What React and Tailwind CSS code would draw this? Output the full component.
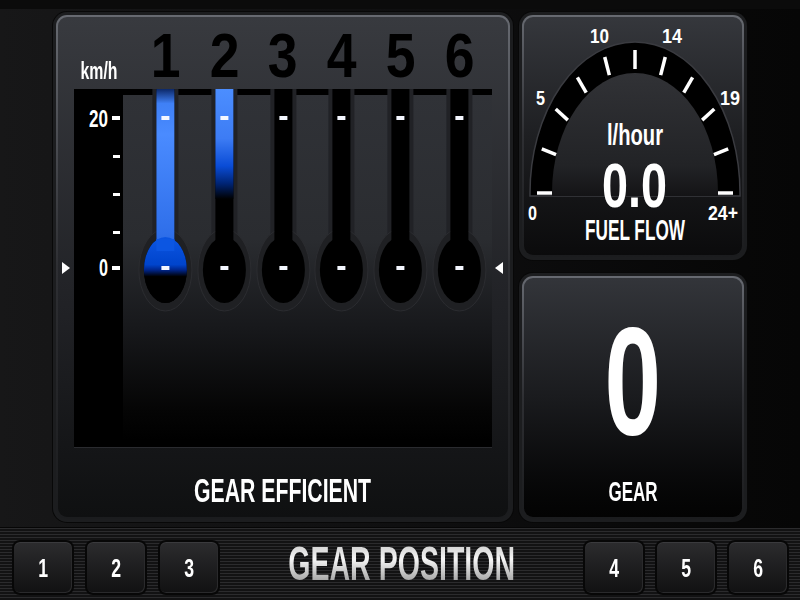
const Frame = ({ className, inner, children }) => (
  <div className={`rounded-[14px] bg-[#1c1d1f] p-[3px] shadow-[0_0_0_1px_#080808] ${className}`}>
    <div className="h-full rounded-[11px] bg-gradient-to-b from-[#676a71] via-[#2e2f33] to-[#1b1c1e] p-[2px]">
      <div className={`h-full rounded-[9px] ${inner}`}>{children}</div>
    </div>
  </div>
);

// one thermometer column of the gear chart
function Tube({ level }) {
  const c = 29.4;
  const id = `t${level}`;
  return (
    <svg width="58.8" height="225" viewBox="0 0 58.8 225" className="block">
      <defs>
        <linearGradient id={`${id}a`} x1="0" y1="0" x2="0" y2="181" gradientUnits="userSpaceOnUse">
          <stop offset="0" stopColor="#0c2868" />
          <stop offset="0.08" stopColor="#3f80f6" />
          <stop offset="0.25" stopColor="#4a8bff" />
          <stop offset="0.8" stopColor="#2f6fea" />
          <stop offset="1" stopColor="#1658dc" />
        </linearGradient>
        <linearGradient id={`${id}b`} x1="0" y1="148" x2="0" y2="214" gradientUnits="userSpaceOnUse">
          <stop offset="0" stopColor="#0c56e2" />
          <stop offset="0.42" stopColor="#0044cc" />
          <stop offset="0.5" stopColor="#00258a" />
          <stop offset="0.6" stopColor="#000" />
        </linearGradient>
        <linearGradient id={`${id}c`} x1="0" y1="0" x2="0" y2="110" gradientUnits="userSpaceOnUse">
          <stop offset="0" stopColor="#4c8eff" />
          <stop offset="0.45" stopColor="#3d7cf4" />
          <stop offset="0.7" stopColor="#0a4cd6" />
          <stop offset="0.86" stopColor="#002474" />
          <stop offset="1" stopColor="#000" />
        </linearGradient>
      </defs>
      <rect x={c - 13} y="0" width="26" height="181" fill="#212226" />
      <ellipse cx={c} cy="181" rx="26.5" ry="41" fill="#1f2023" stroke="#2b2c30" strokeWidth="1" />
      <rect x={c - 9} y="0" width="18" height="181" fill="#000" />
      <ellipse cx={c} cy="181" rx="21.5" ry="33" fill="#000" />
      {level === 1 && (
        <>
          <rect x={c - 9} y="0" width="18" height="160" fill={`url(#${id}a)`} />
          <ellipse cx={c} cy="181" rx="21.5" ry="33" fill={`url(#${id}b)`} />
          <rect x={c - 9} y="150" width="18" height="12" fill="#0c56e2" />
        </>
      )}
      {level === 2 && <rect x={c - 9} y="0" width="18" height="110" fill={`url(#${id}c)`} />}
      <rect x={c - 4} y="27" width="8" height="4" fill="#f4f7ff" />
      <rect x={c - 4} y="177" width="8" height="4" fill="#f4f7ff" />
    </svg>
  );
}

function FuelGauge() {
  const cx = 635;
  const cy = 193;
  const ticks = Array.from({ length: 11 }, (_, i) => {
    const a = Math.PI - (i * Math.PI) / 10;
    return {
      x1: cx + 98 * Math.cos(a),
      y1: cy - 143 * Math.sin(a),
      x2: cx + 83 * Math.cos(a),
      y2: cy - 124 * Math.sin(a),
    };
  });
  const labels = [
    { t: '0', x: 528, y: 220, w: 9 },
    { t: '5', x: 536, y: 105, w: 9 },
    { t: '10', x: 590, y: 43, w: 19 },
    { t: '14', x: 662, y: 43, w: 20 },
    { t: '19', x: 720, y: 105, w: 20 },
    { t: '24+', x: 708, y: 220, w: 30 },
  ];
  return (
    <svg width="218" height="238" viewBox="524 17 218 238" className="block">
      <defs>
        <linearGradient id="dome" x1="0" y1="73" x2="0" y2="196" gradientUnits="userSpaceOnUse">
          <stop offset="0" stopColor="#313236" />
          <stop offset="0.75" stopColor="#222326" />
          <stop offset="1" stopColor="#141416" />
        </linearGradient>
      </defs>
      <path d="M530 196 L530 193 A105 151 0 0 1 740 193 L740 196 Z" fill="#000" stroke="#3a3b40" strokeWidth="1.5" />
      <path d="M552 196 L552 193 A83 120 0 0 1 718 193 L718 196 Z" fill="url(#dome)" />
      {ticks.map((k, i) => (
        <line key={i} x1={k.x1} y1={k.y1} x2={k.x2} y2={k.y2} stroke="#fff" strokeWidth="3.5" />
      ))}
      <g fill="#fff" fontFamily="'Liberation Sans', Arial, sans-serif" fontWeight="700">
        {labels.map((l) => (
          <text key={l.t} x={l.x} y={l.y} fontSize="21" textLength={l.w} lengthAdjust="spacingAndGlyphs">
            {l.t}
          </text>
        ))}
        <text x="607" y="145" fontSize="29" textLength="56" lengthAdjust="spacingAndGlyphs">l/hour</text>
        <text x="602" y="207" fontSize="63" textLength="65" lengthAdjust="spacingAndGlyphs">0.0</text>
        <text x="585" y="240" fontSize="29" textLength="100" lengthAdjust="spacingAndGlyphs">FUEL FLOW</text>
      </g>
    </svg>
  );
}

const Key = ({ n }) => (
  <button className="w-[62px] h-[55px] rounded-[8px] border-2 border-[#070707] bg-gradient-to-b from-[#2c2c2e] to-[#111112] shadow-[inset_0_1px_0_#3a3a3d,inset_-1px_-1px_0_#2a2a2c] flex items-center justify-center">
    <span className="inline-block text-[26px] leading-none font-bold text-white scale-x-[0.68]">{n}</span>
  </button>
);

export default function App() {
  return (
    <div className="w-[800px] h-[600px] flex flex-col overflow-hidden bg-gradient-to-r from-[#171718] via-[#0f0f10] to-[#060606] font-['Liberation_Sans',Arial,sans-serif]">
      <div className="h-[9px] bg-[#0b0b0b]" />

      <div className="flex gap-[6px] pl-[53px] pt-[3px] h-[518px]">
        {/* Gear efficient panel */}
        <Frame className="w-[460px] h-[510px]" inner="bg-gradient-to-b from-[#383a3f] via-[#202125] via-60% to-[#0f1011]">
          <div className="flex h-[72px] pl-[16px]">
            <div className="w-[49px] flex items-end justify-center pb-[6px]">
              <span className="inline-block text-[24px] leading-none font-bold text-white scale-x-[0.66]">km/h</span>
            </div>
            <div className="flex items-end pl-[13px] pb-[2px]">
              {[1, 2, 3, 4, 5, 6].map((n) => (
                <div key={n} className="w-[58.8px] flex justify-center">
                  <span className="inline-block text-[63px] leading-none font-bold text-black scale-x-[0.85]">{n}</span>
                </div>
              ))}
            </div>
          </div>

          <div className="flex h-[359px]">
            <div className="w-[16px] pt-[173px] pl-[4px]">
              <svg width="8" height="12" className="block"><polygon points="0,0 8,6 0,12" fill="#fff" /></svg>
            </div>
            <div className="w-[418px] flex bg-black border-b border-[#2a2b2f]">
              <svg width="49" height="358" className="block shrink-0">
                <g fill="#fff" fontFamily="'Liberation Sans', Arial, sans-serif" fontWeight="700">
                  <text x="15" y="38" fontSize="23" textLength="19" lengthAdjust="spacingAndGlyphs">20</text>
                  <text x="25" y="187" fontSize="23" textLength="9" lengthAdjust="spacingAndGlyphs">0</text>
                </g>
                <rect x="38" y="27" width="8" height="4" fill="#fff" />
                <rect x="39" y="66" width="7" height="3" fill="#fff" />
                <rect x="39" y="104" width="7" height="3" fill="#fff" />
                <rect x="39" y="142" width="7" height="3" fill="#fff" />
                <rect x="38" y="177" width="8" height="4" fill="#fff" />
              </svg>
              <div className="flex-1 flex items-start pl-[13px] bg-[linear-gradient(180deg,#000_0px,#000_6px,#303237_6px,#2a2c30_150px,#17181b_240px,#050505_320px,#000_351px,#000_358px)]">
                {[1, 2, 3, 4, 5, 6].map((n) => (
                  <Tube key={n} level={n} />
                ))}
              </div>
            </div>
            <div className="w-[16px] pt-[173px] pl-[3px]">
              <svg width="8" height="12" className="block"><polygon points="8,0 0,6 8,12" fill="#fff" /></svg>
            </div>
          </div>

          <div className="flex justify-center pt-[26px]">
            <span className="inline-block whitespace-nowrap text-[33px] leading-none font-bold text-white scale-x-[0.644]">GEAR EFFICIENT</span>
          </div>
        </Frame>

        {/* Right column */}
        <div className="w-[228px] flex flex-col gap-[13px]">
          <Frame className="h-[248px]" inner="bg-gradient-to-b from-[#35373c] via-[#1e1f22] to-[#0b0b0c]">
            <FuelGauge />
          </Frame>
          <Frame className="h-[249px]" inner="bg-gradient-to-b from-[#33353a] via-[#1a1b1e] via-50% to-[#030303] flex flex-col items-center">
            <span className="inline-block mt-[27px] text-[154px] leading-none font-bold text-white scale-x-[0.66]">0</span>
            <span className="inline-block mt-[20px] text-[27px] leading-none font-bold text-white scale-x-[0.63]">GEAR</span>
          </Frame>
        </div>
      </div>

      {/* Bottom bar */}
      <div className="h-[73px] flex items-start pt-[12px] pl-[12px] pr-[11px] border-t border-[#060606] bg-[image:repeating-linear-gradient(180deg,#2b2b2d_0px,#2b2b2d_1px,#121213_1px,#121213_3px)]">
        <div className="flex gap-[11px] shrink-0">
          {[1, 2, 3].map((n) => <Key key={n} n={n} />)}
        </div>
        <div className="flex-1 min-w-0 flex justify-center">
          <span className="inline-block shrink-0 whitespace-nowrap text-[48px] leading-none font-bold scale-x-[0.595] bg-gradient-to-b from-[#c4c4c4] via-[#f6f6f6] via-40% to-[#8e8e8e] bg-clip-text text-transparent">
            GEAR POSITION
          </span>
        </div>
        <div className="flex gap-[10px] shrink-0">
          {[4, 5, 6].map((n) => <Key key={n} n={n} />)}
        </div>
      </div>
    </div>
  );
}
